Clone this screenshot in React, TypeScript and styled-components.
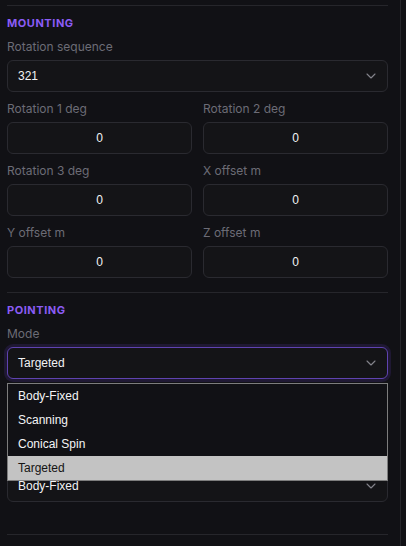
import React from "react";
import styled, { createGlobalStyle, css } from "styled-components";
import { ChevronDown } from "lucide-react";

const GlobalStyle = createGlobalStyle`
  html, body { margin: 0; padding: 0; background: #111115; }
  body { font-family: Inter, "Noto Sans", sans-serif; }
  * { box-sizing: border-box; }
`;

const Panel = styled.div`
  width: 401px;
  min-height: 546px;
  border-right: 1px solid #26262b;
  padding: 0 12px 0 7px;
  background: #111115;
`;

const TopRule = styled.div`
  height: 6px;
  border-bottom: 1px solid #26262b;
`;

const Section = styled.section<{ $bottom?: number }>`
  padding: 9px 0 ${(p) => p.$bottom ?? 14}px;
  border-bottom: 1px solid #26262b;
  display: flex;
  flex-direction: column;
`;

const Title = styled.h3`
  margin: 0 0 8px;
  font-family: Inter, sans-serif;
  font-size: 11px;
  line-height: 16px;
  font-weight: 700;
  letter-spacing: 0.55px;
  text-transform: uppercase;
  color: #8b5cf6;
`;

const Fields = styled.div`
  display: flex;
  flex-direction: column;
  gap: 9px;
`;

const Grid = styled.div`
  display: grid;
  grid-template-columns: 1fr 1fr;
  column-gap: 11px;
  row-gap: 9px;
`;

const Field = styled.div`
  display: flex;
  flex-direction: column;
  position: relative;
`;

/* area hidden under the open list in the reference */
const Covered = styled.div`
  height: 82px;
`;

const Label = styled.label`
  font-family: Inter, sans-serif;
  font-size: 12px;
  line-height: 16px;
  color: #6c6c76;
  margin-bottom: 5px;
`;

const controlBase = css`
  height: 32px;
  border-radius: 6px;
  border: 1px solid #2a2a30;
  background: #141417;
  color: #f2f2f4;
  font-family: "Liberation Sans", Arial, sans-serif;
  font-size: 12px;
`;

const SelectBox = styled.div<{ $focused?: boolean }>`
  ${controlBase}
  display: flex;
  align-items: center;
  justify-content: space-between;
  padding: 0 8px 0 10px;
  ${(p) =>
    p.$focused &&
    css`
      border-color: #5f43b0;
      box-shadow: 0 0 0 3px #1f1833;
    `}
  svg { color: #84848c; }
`;

const NumInput = styled.input`
  ${controlBase}
  width: 100%;
  text-align: center;
  padding: 0 10px;
  outline: none;
`;

const DropList = styled.ul`
  position: absolute;
  left: 0;
  right: 0;
  top: calc(100% + 4px);
  margin: 0;
  padding: 0;
  list-style: none;
  border: 1px solid #7d7d7d;
  background: #111115;
  z-index: 10;
`;

const Option = styled.li<{ $active?: boolean }>`
  height: 24px;
  line-height: 24px;
  padding-left: 10px;
  font-family: "Liberation Sans", Arial, sans-serif;
  font-size: 12px;
  color: ${(p) => (p.$active ? "#141414" : "#f4f4f6")};
  background: ${(p) => (p.$active ? "#c3c3c3" : "transparent")};
`;

const Select = ({ value, focused }: { value: string; focused?: boolean }) => (
  <SelectBox $focused={focused}>
    <span>{value}</span>
    <ChevronDown size={16} strokeWidth={1.6} />
  </SelectBox>
);

const numFields = [
  "Rotation 1 deg",
  "Rotation 2 deg",
  "Rotation 3 deg",
  "X offset m",
  "Y offset m",
  "Z offset m",
];

const modes = ["Body-Fixed", "Scanning", "Conical Spin", "Targeted"];

export default function App() {
  return (
    <>
      <GlobalStyle />
      <Panel>
        <TopRule />
        <Section>
          <Title>Mounting</Title>
          <Fields>
            <Field>
              <Label>Rotation sequence</Label>
              <Select value="321" />
            </Field>
            <Grid>
              {numFields.map((n) => (
                <Field key={n}>
                  <Label>{n}</Label>
                  <NumInput value="0" readOnly />
                </Field>
              ))}
            </Grid>
          </Fields>
        </Section>
        <Section $bottom={32}>
          <Title>Pointing</Title>
          <Fields>
            <Field>
              <Label>Mode</Label>
              <Select value="Targeted" focused />
              <DropList>
                {modes.map((m) => (
                  <Option key={m} $active={m === "Targeted"}>
                    {m}
                  </Option>
                ))}
              </DropList>
            </Field>
            <Field>
              <Covered />
              <Select value="Body-Fixed" />
            </Field>
          </Fields>
        </Section>
      </Panel>
    </>
  );
}
